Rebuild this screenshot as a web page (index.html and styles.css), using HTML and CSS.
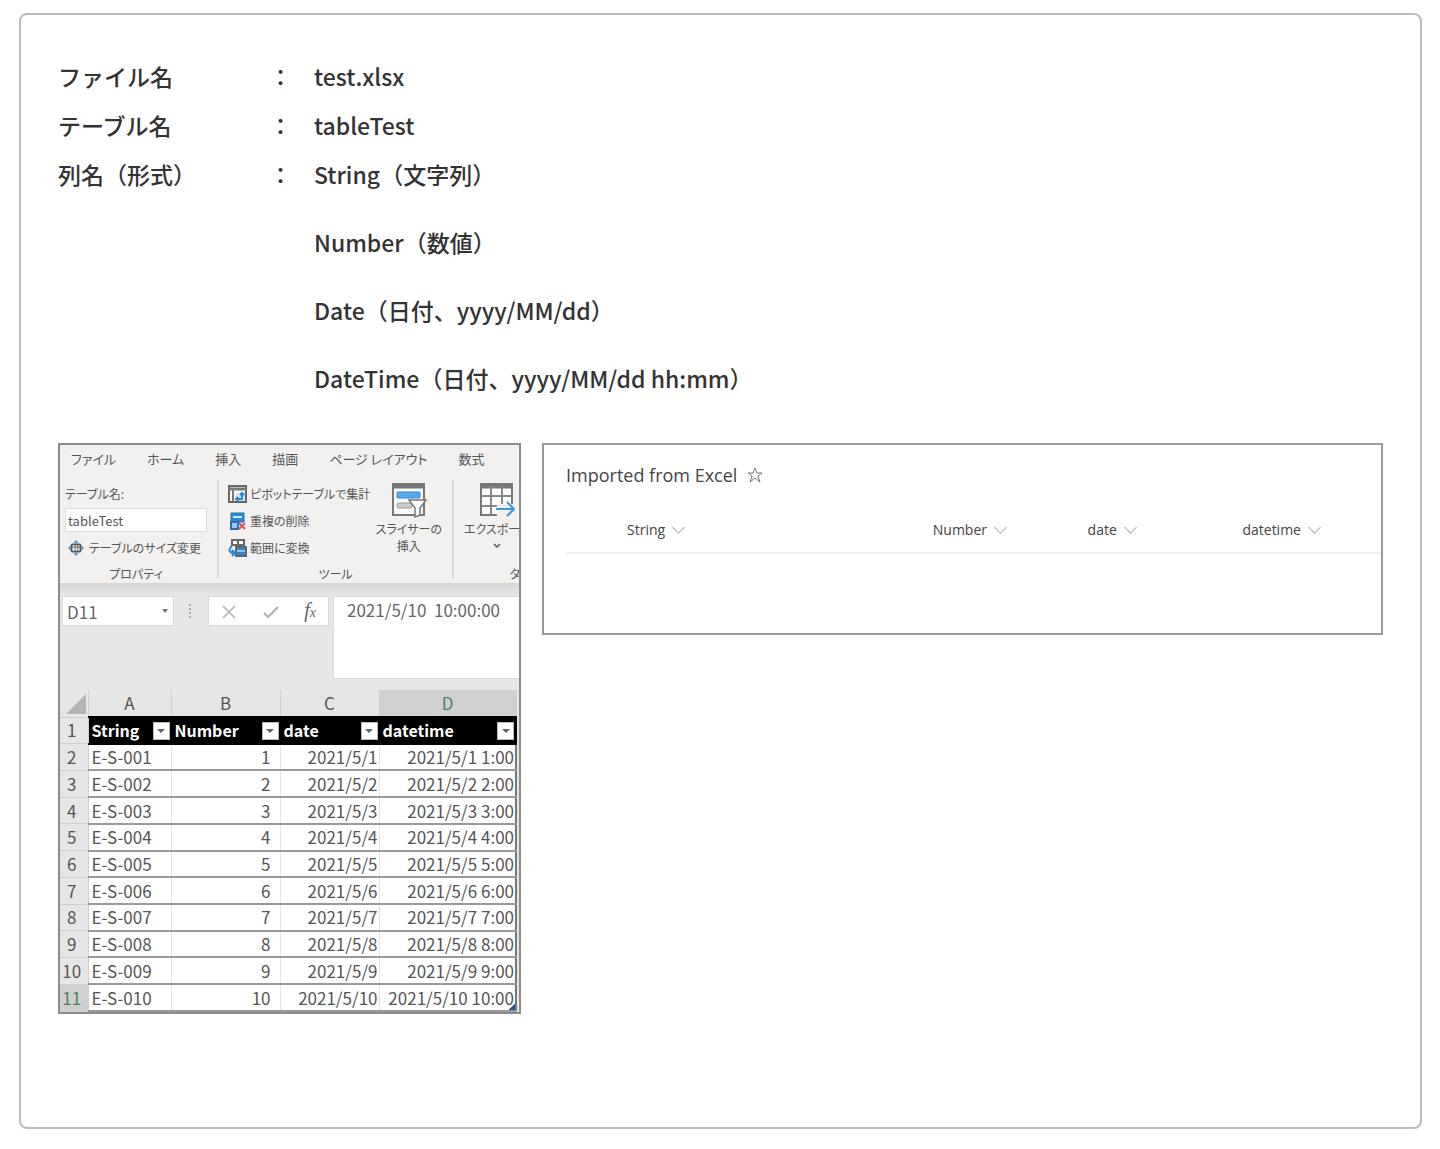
FILE: index.html
```html
<!DOCTYPE html>
<html lang="ja">
  <head>
    <meta charset="UTF-8" />
    <meta name="viewport" content="width=device-width, initial-scale=1.0" />
    <title>test.xlsx</title>
    <link rel="stylesheet" href="styles.css">
  </head>
  <body>
    <main class="card">
      <dl class="info">
        <div class="info-row">
          <dt>ファイル名</dt>
          <dd>：</dd>
          <dd>test.xlsx</dd>
        </div>
        <div class="info-row">
          <dt>テーブル名</dt>
          <dd>：</dd>
          <dd>tableTest</dd>
        </div>
        <div class="info-row">
          <dt>列名（形式）</dt>
          <dd>：</dd>
          <dd class="columns">
            <p>String（文字列）</p>
            <p>Number（数値）</p>
            <p>Date（日付、yyyy/MM/dd）</p>
            <p>DateTime（日付、yyyy/MM/dd hh:mm）</p>
          </dd>
        </div>
      </dl>

      <div class="samples">
        <section class="excel">
          <div class="ribbon">
            <nav class="tabs">
              <button>ファイル</button>
              <button>ホーム</button>
              <button>挿入</button>
              <button>描画</button>
              <button>ページ レイアウト</button>
              <button>数式</button>
            </nav>
            <div class="groups">
              <div class="group group-property">
                <div class="group-body stack">
                  <label for="tableName">テーブル名:</label>
                  <input type="text" id="tableName" value="tableTest" />
                  <button class="tool resize">
                    <svg width="16" height="16" viewBox="0 0 18 18" fill="none">
                      <rect x="4" y="5" width="10" height="8" rx="1" fill="#fff" stroke="#555" stroke-width="2" />
                      <path d="M4 8h10M8 5v8M11 5v8" stroke="#555" />
                      <path d="M9 0l3 3H6zM9 18l3-3H6zM0 9l3-3v6zM18 9l-3-3v6z" fill="#3f93d6" />
                    </svg>
                    テーブルのサイズ変更
                  </button>
                </div>
                <div class="group-title">プロパティ</div>
              </div>

              <div class="group group-tools">
                <div class="group-body tools">
                  <div class="stack">
                    <button class="tool">
                      <svg width="20" height="20" viewBox="0 0 20 20" fill="none">
                        <rect x="1" y="2" width="17" height="16" fill="#fff" stroke="#666" stroke-width="2" />
                        <path d="M1 5h17" stroke="#777" stroke-width="3" />
                        <path d="M5 6v12" stroke="#777" stroke-width="2" />
                        <path d="M8 9h9v8H8z" fill="#cfe4f6" />
                        <path d="M9 15h5v-5M12 11l2-2 2 2M10 13l-2 2 2 2" stroke="#2b88d8" stroke-width="2" />
                      </svg>
                      ピボットテーブルで集計
                    </button>
                    <button class="tool">
                      <svg width="20" height="20" viewBox="0 0 20 20" fill="none">
                        <path d="M3 2h13v9H3z" fill="#2b88d8" stroke="#2470b3" />
                        <path d="M5 6h9" stroke="#d8ebfa" stroke-width="2" />
                        <path d="M3 11h7v7H3z" fill="#9cc8ee" stroke="#2470b3" stroke-width="2" />
                        <path d="M11 12l6 6M17 12l-6 6" stroke="#e8504a" stroke-width="2" />
                      </svg>
                      重複の削除
                    </button>
                    <button class="tool">
                      <svg width="20" height="20" viewBox="0 0 20 20" fill="none">
                        <path d="M4 2h12v5H4zM10 2v5" fill="#fff" stroke="#666" stroke-width="2" />
                        <path d="M8 9h10v9H8z" fill="#2b88d8" stroke="#666" stroke-width="2" />
                        <path d="M9 13h8" stroke="#fff" />
                        <path d="M4 8c-4 3-3 7 2 7M4 12l3 3-3 3" stroke="#2b88d8" stroke-width="2" />
                      </svg>
                      範囲に変換
                    </button>
                  </div>
                  <button class="big-tool">
                    <svg width="36" height="36" viewBox="0 0 36 36" fill="none">
                      <rect x="2" y="2" width="31" height="31" fill="#fafafa" stroke="#777" stroke-width="2" />
                      <path d="M2 4h31" stroke="#777" stroke-width="5" />
                      <rect x="6" y="10" width="23" height="6" rx="1" fill="#5eaae6" stroke="#2b88d8" />
                      <rect x="6" y="21" width="15" height="5" rx="2" fill="#ccc" stroke="#999" />
                      <path d="M18 18h17l-6 8v7l-5 2v-9z" fill="#fff" stroke="#777" stroke-width="1.5" />
                    </svg>
                    <span>スライサーの<br />挿入</span>
                  </button>
                </div>
                <div class="group-title">ツール</div>
              </div>

              <div class="group group-export">
                <div class="group-body">
                  <button class="big-tool">
                    <svg width="36" height="36" viewBox="0 0 36 36" fill="none">
                      <rect x="2" y="2" width="31" height="31" fill="#fff" stroke="#777" stroke-width="2" />
                      <path d="M2 4h31" stroke="#777" stroke-width="5" />
                      <path d="M2 14h31M2 24h31M12 4v29M23 4v29" stroke="#888" stroke-width="2" />
                      <path d="M18 22h17v12H18z" fill="#f2f1f0" />
                      <path d="M17 27h17M28 20l7 7-7 7" stroke="#3a96dd" stroke-width="2" />
                    </svg>
                    <span>エクスポート</span>
                    <svg class="caret" width="8" height="6" viewBox="0 0 8 6" fill="none">
                      <path d="M1 1l3 3 3-3" stroke="#555" stroke-width="1.5" />
                    </svg>
                  </button>
                </div>
                <div class="group-title">タ</div>
              </div>
            </div>
          </div>

          <div class="formula-bar">
            <div class="name-box">
              <input type="text" value="D11" aria-label="名前ボックス" />
              <button aria-label="名前の一覧">
                <svg width="8" height="6" viewBox="0 0 8 6"><path d="M1 1h6L4 5z" fill="#777" /></svg>
              </button>
            </div>
            <svg class="grip" width="4" height="14" viewBox="0 0 4 14" fill="#aaa">
              <path d="M1 0h2v2H1zM1 4h2v2H1zM1 8h2v2H1zM1 12h2v2H1z" />
            </svg>
            <div class="formula-buttons">
              <button aria-label="キャンセル">
                <svg width="16" height="14" viewBox="0 0 16 14"><path d="M2 1l12 12M14 1L2 13" stroke="#b0b0b0" stroke-width="1.5" /></svg>
              </button>
              <button aria-label="入力">
                <svg width="16" height="14" viewBox="0 0 16 14" fill="none"><path d="M1 8l4 4L15 2" stroke="#b0b0b0" stroke-width="2" /></svg>
              </button>
              <button class="fx" aria-label="関数の挿入">f<small>x</small></button>
            </div>
            <textarea class="formula" aria-label="数式バー">2021/5/10  10:00:00</textarea>
          </div>

          <table class="sheet">
            <colgroup>
              <col class="col-no" />
              <col class="col-a" />
              <col class="col-b" />
              <col class="col-c" />
              <col class="col-d" />
            </colgroup>
            <thead>
              <tr>
                <th class="corner">
                  <svg width="20" height="20" viewBox="0 0 20 20"><path d="M20 0v20H0z" fill="#b4b4b4" /></svg>
                </th>
                <th>A</th>
                <th>B</th>
                <th>C</th>
                <th class="active">D</th>
              </tr>
            </thead>
            <tbody>
              <tr class="field-row">
                <th>1</th>
                <td><div class="field">String<button aria-label="フィルター"></button></div></td>
                <td><div class="field">Number<button aria-label="フィルター"></button></div></td>
                <td><div class="field">date<button aria-label="フィルター"></button></div></td>
                <td><div class="field">datetime<button aria-label="フィルター"></button></div></td>
              </tr>
              <tr><th>2</th><td>E-S-001</td><td>1</td><td>2021/5/1</td><td>2021/5/1 1:00</td></tr>
              <tr><th>3</th><td>E-S-002</td><td>2</td><td>2021/5/2</td><td>2021/5/2 2:00</td></tr>
              <tr><th>4</th><td>E-S-003</td><td>3</td><td>2021/5/3</td><td>2021/5/3 3:00</td></tr>
              <tr><th>5</th><td>E-S-004</td><td>4</td><td>2021/5/4</td><td>2021/5/4 4:00</td></tr>
              <tr><th>6</th><td>E-S-005</td><td>5</td><td>2021/5/5</td><td>2021/5/5 5:00</td></tr>
              <tr><th>7</th><td>E-S-006</td><td>6</td><td>2021/5/6</td><td>2021/5/6 6:00</td></tr>
              <tr><th>8</th><td>E-S-007</td><td>7</td><td>2021/5/7</td><td>2021/5/7 7:00</td></tr>
              <tr><th>9</th><td>E-S-008</td><td>8</td><td>2021/5/8</td><td>2021/5/8 8:00</td></tr>
              <tr><th>10</th><td>E-S-009</td><td>9</td><td>2021/5/9</td><td>2021/5/9 9:00</td></tr>
              <tr><th class="active">11</th><td>E-S-010</td><td>10</td><td>2021/5/10</td><td class="last">2021/5/10 10:00</td></tr>
            </tbody>
          </table>
        </section>

        <section class="list">
          <h2>
            Imported from Excel
            <button aria-label="お気に入り">
              <svg width="16" height="16" viewBox="0 0 16 16" fill="none">
                <path d="M8 1l2 5h5l-4 3 2 6-5-4-5 4 2-6-4-3h5z" stroke="#777" />
              </svg>
            </button>
          </h2>
          <table>
            <thead>
              <tr>
                <th class="col-string"><button>String <i class="chevron"></i></button></th>
                <th class="col-number"><button>Number <i class="chevron"></i></button></th>
                <th class="col-date"><button>date <i class="chevron"></i></button></th>
                <th class="col-datetime"><button>datetime <i class="chevron"></i></button></th>
              </tr>
            </thead>
          </table>
        </section>
      </div>
    </main>
  </body>
</html>
```
FILE: styles.css
```css
/* General styling */
* {
  box-sizing: border-box;
}

body {
  font-family: "Noto Sans CJK JP", sans-serif;
  background-color: #fff;
  color: #333;
  margin: 0;
  padding: 13px 18px 20px 19px;
}

button,
input,
textarea {
  font: inherit;
  color: inherit;
  border: none;
  background: none;
  margin: 0;
  padding: 0;
}

button {
  cursor: pointer;
  white-space: nowrap;
}

svg {
  flex-shrink: 0;
}

.card {
  border: 2px solid #bbb;
  border-radius: 8px;
  padding: 37px 37px 113px;
}

/* File description */
.info {
  margin: 0 0 40px;
  font-size: 23px;
  font-weight: 500;
  line-height: 49px;
}

.info-row {
  display: grid;
  grid-template-columns: 211px 45px 1fr;
}

.info dd,
.info p {
  margin: 0;
}

.columns {
  display: grid;
  gap: 19px;
}

.samples {
  display: grid;
  grid-template-columns: 463px 1fr;
  align-items: start;
  gap: 21px;
}

/* Excel window */
.excel {
  border: 2px solid #8c8c8c;
  background-color: #e6e6e6;
  overflow: hidden;
}

.ribbon {
  height: 138px;
  background-color: #f2f1f0;
  color: #555;
  font-size: 12px;
  font-feature-settings: "palt";
}

.tabs {
  display: flex;
  gap: 31px;
  padding-left: 11px;
  font-size: 13px;
  line-height: 28px;
}

.groups {
  display: flex;
  padding-top: 7px;
}

.group {
  display: flex;
  flex-direction: column;
  flex-shrink: 0;
  height: 98px;
  border-right: 2px solid #d8d8d8;
}

.group-body {
  flex: none;
  height: 84px;
}

.group-title {
  line-height: 20px;
  text-align: center;
}

.group-property {
  width: 159px;
  padding: 0 10px 0 5px;
}

.group-tools {
  width: 235px;
}

.group-export {
  width: 66px;
  border-right: none;
}

.group-export .group-title {
  text-align: right;
}

.stack {
  display: flex;
  flex-direction: column;
  line-height: 27px;
}

.stack input {
  height: 24px;
  margin: 1px 0 2px;
  padding: 0 2px;
  width: 100%;
  border: 1px solid #ddd;
  background-color: #fff;
  font-size: 13px;
}

.tool {
  display: flex;
  align-items: center;
  gap: 2px;
}

.resize {
  gap: 5px;
  padding-left: 3px;
}

.tools {
  display: flex;
  justify-content: space-between;
  padding: 0 10px 0 9px;
}

.big-tool {
  display: flex;
  flex-direction: column;
  align-items: center;
  gap: 2px;
  padding-top: 2px;
  line-height: 17px;
}

.group-export .big-tool {
  padding-left: 10px;
}

.caret {
  margin-top: 4px;
}

/* Formula bar */
.formula-bar {
  display: flex;
  align-items: flex-start;
  height: 107px;
  padding: 13px 0 0 2px;
  background-image: linear-gradient(#d4d4d4, #e6e6e6 12px);
  color: #666;
  font-size: 17px;
}

.name-box,
.formula-buttons {
  display: flex;
  align-items: center;
  height: 30px;
  border: 1px solid #dadada;
  background-color: #fff;
}

.name-box {
  width: 112px;
  padding: 0 4px;
  justify-content: space-between;
}

.name-box input {
  width: 80px;
}

.name-box button {
  display: flex;
}

.grip {
  margin: 8px 16px 0 14px;
}

.formula-buttons {
  width: 121px;
  justify-content: space-between;
  padding: 0 12px;
}

.fx {
  font: italic 20px/24px "Liberation Serif", serif;
}

.fx small {
  font-size: 14px;
}

.formula {
  flex: 1;
  min-width: 0;
  height: 83px;
  margin-left: 4px;
  padding: 0 13px;
  border: 1px solid #dadada;
  border-right: none;
  background-color: #fff;
  line-height: 26px;
  resize: none;
  outline: none;
}

/* Worksheet */
.sheet {
  width: 457px;
  height: 322px;
  border-collapse: collapse;
  table-layout: fixed;
  color: #555;
  font-size: 17px;
  line-height: 20px;
}

.col-no {
  width: 28px;
}

.col-a {
  width: 83px;
}

.col-b {
  width: 109px;
}

.col-c {
  width: 99px;
}

.sheet th,
.sheet td {
  padding: 0 1px 0 3px;
}

.sheet th {
  padding: 0;
  border: 1px solid #d0d0d0;
  font-weight: 400;
}

.sheet tr th:first-child {
  padding-right: 4px;
  border-left: none;
}

.sheet thead th {
  height: 27px;
  border-top: none;
}

.sheet thead .corner {
  padding: 0;
  vertical-align: bottom;
}

.corner svg {
  display: block;
  margin: 0 2px 3px 6px;
}

.sheet .active {
  background-color: #d0d0d0;
  color: #4f7f66;
}

.sheet td {
  border: 1px solid #e4e4e4;
  border-top: 2px solid #999;
  border-bottom: 2px solid #999;
  background-color: #fff;
  text-align: right;
}

.sheet td:nth-child(2) {
  text-align: left;
}

.sheet td:nth-child(3) {
  padding-right: 9px;
}

.sheet td:last-child {
  border-right: 2px solid #777;
}

.sheet .last {
  background-image: linear-gradient(135deg, transparent 50%, #2a5699 50%);
  background-position: right bottom;
  background-repeat: no-repeat;
  background-size: 6px 6px;
}

.sheet .field-row td {
  padding: 0 1px 0 3px;
  border-color: #000;
  background-color: #000;
  color: #fff;
  font-size: 16px;
  font-weight: 700;
}

.field {
  display: flex;
  justify-content: space-between;
  align-items: flex-end;
}

.field button {
  display: flex;
  align-items: center;
  justify-content: center;
  width: 17px;
  height: 18px;
  border: 1px solid #bbb;
  background-color: #fff;
}

.field button::before {
  content: "";
  border: 4px solid transparent;
  border-top-color: #666;
  border-bottom: none;
}

/* Imported list */
.list {
  min-height: 192px;
  padding: 17px 0 0 22px;
  border: 2px solid #999;
  color: #444;
  font-family: "Open Sans", sans-serif;
}

.list h2 {
  display: flex;
  align-items: center;
  gap: 10px;
  margin: 0 0 19px;
  font-size: 18px;
  font-weight: 500;
  line-height: 26px;
}

.list h2 button {
  display: flex;
}

.list table {
  width: 100%;
  border-collapse: collapse;
  font-size: 14px;
}

.list th {
  height: 46px;
  padding: 0;
  border-bottom: 2px solid #f0f0ee;
  font-weight: 400;
  text-align: left;
}

.list .col-string {
  width: 45%;
  padding-left: 61px;
}

.col-number,
.col-date {
  width: 19%;
}

.list th button {
  display: flex;
  align-items: center;
  gap: 9px;
}

.chevron {
  width: 9px;
  height: 9px;
  margin-bottom: 5px;
  border: solid #aaa;
  border-width: 0 1px 1px 0;
  transform: rotate(45deg);
}

@media (max-width: 900px) {
  .samples {
    grid-template-columns: 1fr;
  }
}
```
